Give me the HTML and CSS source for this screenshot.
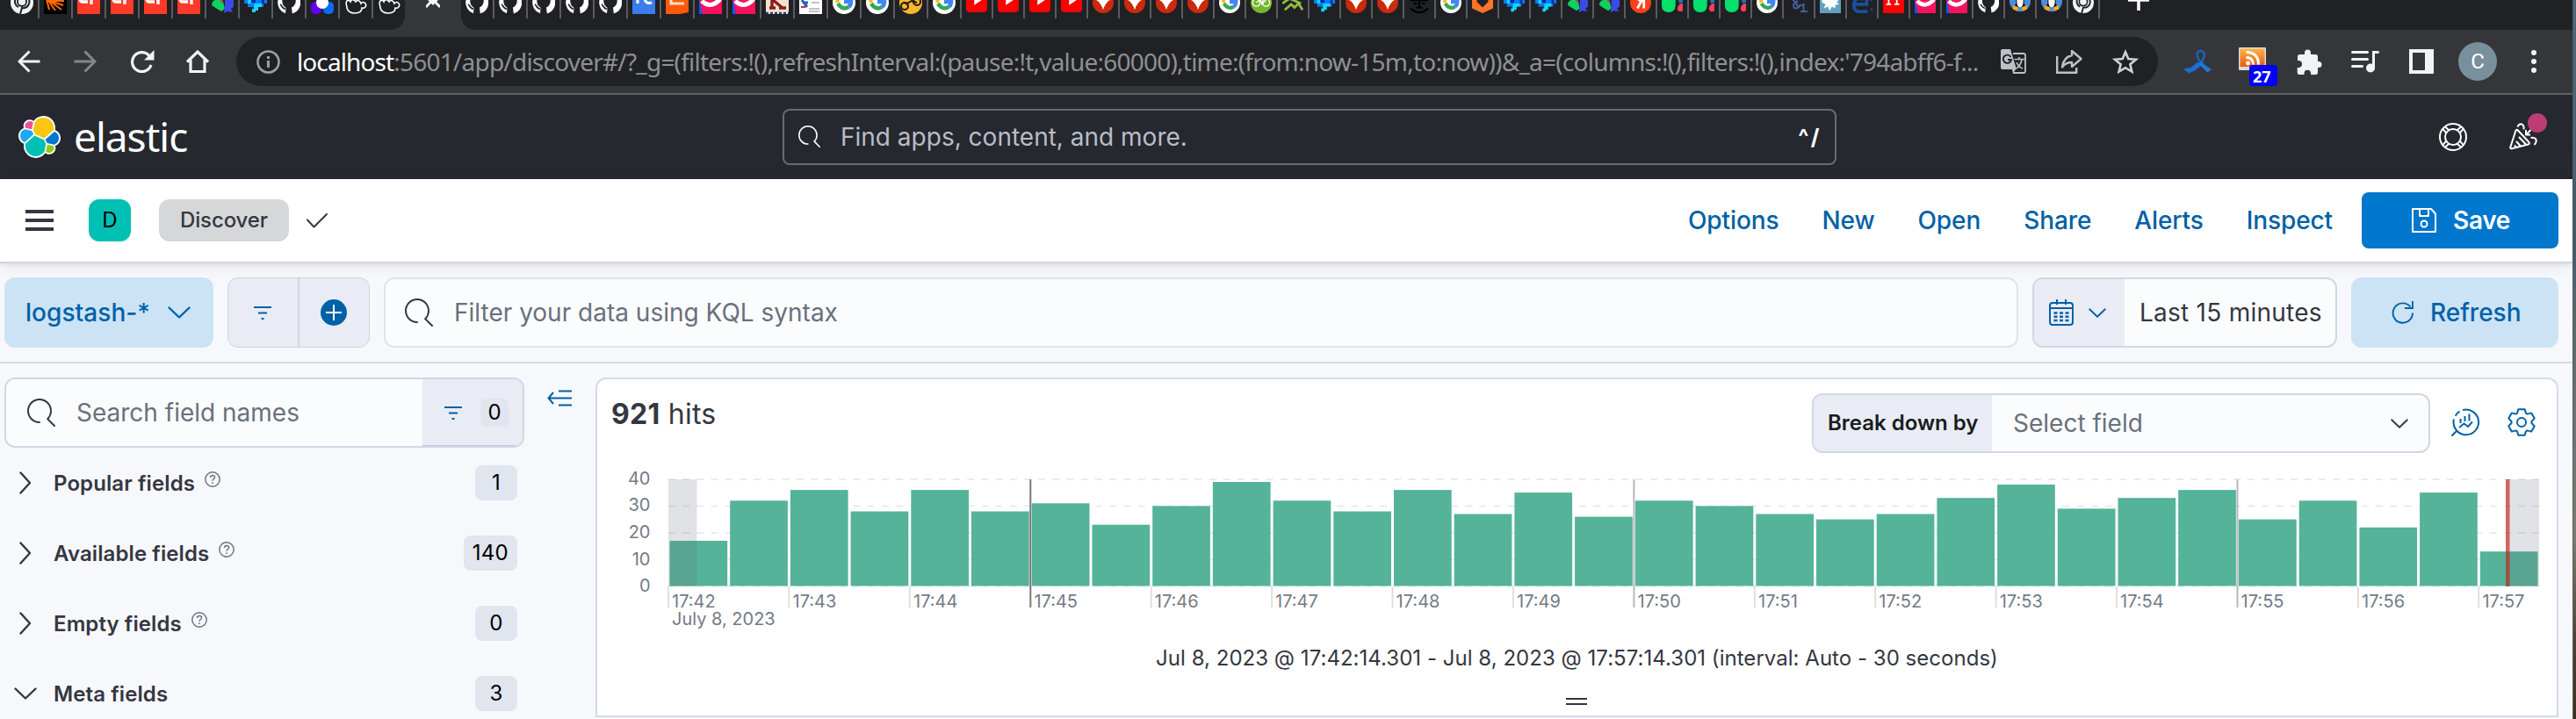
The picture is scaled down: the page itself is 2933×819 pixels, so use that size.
FILE: index.html
```html
<!DOCTYPE html>
<html lang="en">
<head>
<meta charset="utf-8">
<title>Discover - Elastic</title>
<link rel="stylesheet" href="styles.css">
</head>
<body>
<svg class="defs" width="0" height="0" aria-hidden="true">
  <defs>
    <linearGradient id="rssg" x1="0" y1="0" x2="0" y2="1"><stop offset="0" stop-color="#ffb347"/><stop offset="1" stop-color="#ea5a0c"/></linearGradient>
    <symbol id="chrome" viewBox="0 0 26 26"><circle cx="13" cy="13" r="13" fill="#f1f3f4"/><path d="M6 8a7 7 0 0 0 3 10M20 8a7 7 0 0 1-7 11l-2 7" stroke="#202124" stroke-width="2" fill="none"/><circle cx="13" cy="12" r="5" fill="#f1f3f4" stroke="#202124" stroke-width="1.800"/></symbol>
    <symbol id="ray" viewBox="0 0 26 26"><path fill="#000" d="M0 0h26v26H0z"/><path d="M4 11h19M4 10l18 6M4 9l16 12M4 9l9 13M3 9l3 12" stroke="#ff6a00" stroke-width="2"/></symbol>
    <symbol id="cf" viewBox="0 0 26 26"><path fill="#ff3a2b" d="M0 0h26v26H0z"/><path d="M12 12H6q-3 0-3-4V0M16 15V8h9" stroke="#fff" stroke-width="3.400" fill="none"/></symbol>
    <symbol id="shard" viewBox="0 0 26 26"><path fill="#0fd060" d="M2 12l6-4 6 4 2 8-4 3-5-3-6-4z"/><path fill="#3a4be8" d="M16 8h10v10l-3 2 2 4-6-1-4 2 1-8z"/><path fill="#e8303a" d="M10 8h6l-4 5z"/></symbol>
    <symbol id="pix" viewBox="0 0 26 26"><path fill="#0a7cff" d="M0 9h26v5h-4v4H4v-4H0z"/><path fill="#10d8ff" d="M4 9h4v5H4zM12 14h8v4h-4v4h-5v-4zM9 20h4v4H9z"/><path fill="#0030a0" d="M8 9h5v4H8zM20 9h3v5h-3z"/></symbol>
    <symbol id="gh" viewBox="0 0 26 26"><path fill="#fff" d="M13 0a13 13 0 0 0-4 25.300l.5-6.500C7 17 4.500 14 5.500 9h15c1 5-1.500 8-4.500 9.500l.8 7A13 13 0 0 0 13 0z"/><path d="M3 15c2 1 2 5 6 5" stroke="#202124" stroke-width="1.600" fill="none"/></symbol>
    <symbol id="duo" viewBox="0 0 26 26"><rect y="12" width="12" height="14" rx="5" fill="#6200f0"/><rect x="14" y="12" width="12" height="14" rx="5" fill="#0a6cff"/><circle cx="13" cy="13" r="7" fill="#fff"/></symbol>
    <symbol id="paw" viewBox="0 0 26 26"><path d="M3 11c-2 3 0 5 0 8 1 4 4 6 9 6 6 0 8-3 8-6 3 1 6-2 4-5-1-2-4-2-5 0-1-3-4-5-6-2-2-3-5-3-6 0-1-2-3-2-4-1z" fill="none" stroke="#fff" stroke-width="1.600"/></symbol>
    <symbol id="tc" viewBox="0 0 26 26"><path fill="#3b7ded" d="M0 0h26v26H0z"/><path d="M6 14V4M22 13q-8 2-8-6" stroke="#fff" stroke-width="3" fill="none"/></symbol>
    <symbol id="el" viewBox="0 0 26 26"><path fill="#ff5a0a" d="M0 0h26v24l-10 2H0z"/><path d="M6 3v11h15" stroke="#ffe0c8" stroke-width="3" fill="none"/></symbol>
    <symbol id="pink" viewBox="0 0 26 26"><path fill="#f5145c" d="M0 0h26v26H0z"/><path fill="#1a50ff" d="M0 8l4 18H0z"/><path d="M3 11q10 10 21-2" stroke="#fff" stroke-width="5" fill="none"/></symbol>
    <symbol id="kk" viewBox="0 0 26 26"><path fill="#efe3cc" d="M0 0h26v26H0z"/><path d="M7 0v19M4 19h7M8 10l11 9M15 19h8" stroke="#8c1c1c" stroke-width="3.400"/><path d="M0 25h26" stroke="#24408c" stroke-width="2.500" stroke-dasharray="3 2"/></symbol>
    <symbol id="doc" viewBox="0 0 26 26"><path fill="#fff" d="M0 0h26v26H0z"/><path d="M3 10l6 8M5 13h5" stroke="#3060c0" stroke-width="3"/><path d="M2 18h5" stroke="#d03030" stroke-width="2"/><path d="M14 13h9M11 20h12M11 23h12" stroke="#888" stroke-width="1.200"/></symbol>
    <symbol id="goog" viewBox="0 0 26 26"><circle cx="13" cy="13" r="13" fill="#fff"/><path d="M5.500 8v5" stroke="#fbbc05" stroke-width="4"/><path d="M6 14q5 8 12 4" stroke="#34a853" stroke-width="4.500" fill="none"/><path d="M13 12h8q0 4-3 6" stroke="#4285f4" stroke-width="4.500" fill="none"/></symbol>
    <symbol id="moto" viewBox="0 0 26 26"><circle cx="13" cy="13" r="13" fill="#fbb62c"/><g fill="none" stroke="#1a1a1a" stroke-width="2"><circle cx="6" cy="17" r="4"/><circle cx="20" cy="12" r="4"/><path d="M7 15l7-4 6 2"/></g></symbol>
    <symbol id="yt" viewBox="0 0 26 26"><path fill="#f00" d="M0 0h26v20q0 5-5 5H5q-5 0-5-5z"/><path fill="#fff" d="M10 7l9 3-9 6z"/></symbol>
    <symbol id="vee" viewBox="0 0 26 26"><circle cx="13" cy="13" r="13" fill="#cc2a0c"/><path fill="#fff" d="M3 9h20q-7 3-10 13Q10 12 3 9z"/></symbol>
    <symbol id="bike" viewBox="0 0 26 26"><circle cx="13" cy="13" r="13" fill="#74b72c"/><g fill="none" stroke="#fff" stroke-width="1.500"><circle cx="7" cy="13" r="4.500"/><circle cx="19" cy="13" r="4.500"/><path d="M7 13l5-4 2 6 5-6"/></g></symbol>
    <symbol id="hill" viewBox="0 0 26 26"><path d="M0 14l9-6 14 6M3 22l8-7 4 4 5-5 5 8" stroke="#8fbf3c" stroke-width="3" fill="none"/></symbol>
    <symbol id="guy" viewBox="0 0 26 26"><path d="M2 10h22M6 14h4M16 14h4M13 10v9M9 19h8M2 20q11 10 22 0" stroke="#000" stroke-width="2.400" fill="none"/></symbol>
    <symbol id="hex" viewBox="0 0 26 26"><path fill="#fb7428" d="M0 8h26v12l-13 6-13-6z"/><path fill="#202124" d="M6 8h14v4l-7 7-7-7z"/></symbol>
    <symbol id="ya" viewBox="0 0 26 26"><circle cx="13" cy="13" r="13" fill="#fc3f1d"/><path d="M17 2v18M16 11h-3q-4-2-4-6M14 11l-5 9" stroke="#fff" stroke-width="3" fill="none"/></symbol>
    <symbol id="blob" viewBox="0 0 26 26"><rect y="2" width="17" height="23" rx="8" fill="#06e06a"/><path fill="#fc4058" d="M26 14v9c-5 3-8-1-6-5 1-3 3-4 6-4z"/><path fill="#1677c8" d="M20 8h6v5l-4 1z"/></symbol>
    <symbol id="amp" viewBox="0 0 26 26"><path d="M5 9q5 3 7 10M12 11q-8 3-4 9 5 1 7-5M16 17l3-2v9M15 24h9" stroke="#4a62a0" stroke-width="2" fill="none"/></symbol>
    <symbol id="splat" viewBox="0 0 26 26"><path fill="#62a0c0" d="M0 0h26v26H0z"/><path fill="#fff" d="M2 8h22l-3 5 3 2-5 1v4l-4-2-3 5-2-5-5 2 2-5-4-2z"/></symbol>
    <symbol id="ee" viewBox="0 0 26 26"><path d="M18 8H8q-5 2-5 8 0 8 7 8h10M5 15h14v-6" stroke="#1c4f9c" stroke-width="4" fill="none"/><path d="M25 9v2M25 20v3" stroke="#1c4f9c" stroke-width="2"/></symbol>
    <symbol id="ft" viewBox="0 0 26 26"><path fill="#f00" d="M0 0h26v26H0z"/><path d="M7 2v13M4 15h6M17 2v13M14 15h6" stroke="#fff" stroke-width="2"/></symbol>
    <symbol id="tux" viewBox="0 0 26 26"><circle cx="13" cy="11" r="13" fill="#4c8ce0"/><path fill="#111" d="M8 5h10v9l3 5H5l3-5z"/><ellipse cx="13" cy="12" rx="4" ry="7" fill="#fff"/><path fill="#f0b010" d="M5 16l6 3-1 4-6-2zM21 16l-6 3 1 4 6-2z"/></symbol>
    <symbol id="search" viewBox="0 0 16 16"><path d="M11.271 11.978l3.872 3.873a.502.502 0 00.708 0 .502.502 0 000-.708l-3.565-3.564c2.380-2.747 2.267-6.923-.342-9.532-2.730-2.730-7.170-2.730-9.898 0-2.728 2.729-2.728 7.170 0 9.900a6.955 6.955 0 004.949 2.050.5.5 0 000-1 5.960 5.960 0 01-4.242-1.757 6.010 6.010 0 010-8.486 6.004 6.004 0 018.484 0 6.010 6.010 0 010 8.486.5.5 0 00.034.738z"/></symbol>
    <symbol id="filter" viewBox="0 0 22 16"><path d="M1 2h20M6 8.500h10M9.500 15h3" fill="none" stroke="currentColor" stroke-width="2" /></symbol>
    <symbol id="down" viewBox="0 0 26 14"><path d="M1.500 1.500L13 12.500l11.500-11" fill="none" stroke="currentColor" stroke-width="2.400" stroke-linecap="round" stroke-linejoin="round"/></symbol>
    <symbol id="right" viewBox="0 0 14 26"><path d="M1.500 1.500L12 13 1.500 24.500" fill="none" stroke="currentColor" stroke-width="2.400" stroke-linecap="round" stroke-linejoin="round"/></symbol>
    <symbol id="help" viewBox="0 0 18 18"><circle cx="9" cy="9" r="8.200" fill="none" stroke="currentColor" stroke-width="1.400"/><path d="M6.400 7q.2-2.500 2.700-2.500 2.400 0 2.500 2.100 0 1.400-1.500 2.200-1.100.6-1.100 2" fill="none" stroke="currentColor" stroke-width="1.400"/><circle cx="9" cy="13.200" r=".9" fill="currentColor"/></symbol>
  </defs>
</svg>

<div class="desktop">
<div class="window">
  <div class="tabstrip">
    <div class="tabs tabs-left">
      <i class="tab"><svg><use href="#chrome"/></svg></i><i class="tab"><svg><use href="#ray"/></svg></i><i class="tab"><svg><use href="#cf"/></svg></i><i class="tab"><svg><use href="#cf"/></svg></i><i class="tab"><svg><use href="#cf"/></svg></i><i class="tab"><svg><use href="#cf"/></svg></i><i class="tab"><svg><use href="#shard"/></svg></i><i class="tab"><svg><use href="#pix"/></svg></i><i class="tab"><svg><use href="#gh"/></svg></i><i class="tab"><svg><use href="#duo"/></svg></i><i class="tab"><svg><use href="#paw"/></svg></i><i class="tab last"><svg><use href="#paw"/></svg></i>
    </div>
    <div class="tab-active"><svg width="16" height="24" viewBox="0 0 16 24"><path d="M0 14L8 5.500 16 14M0 2l8 8 8-8" fill="none" stroke="#fff" stroke-width="2.800"/></svg></div>
    <div class="tabs tabs-right">
      <i class="tab"><svg><use href="#gh"/></svg></i><i class="tab"><svg><use href="#gh"/></svg></i><i class="tab"><svg><use href="#gh"/></svg></i><i class="tab"><svg><use href="#gh"/></svg></i><i class="tab"><svg><use href="#gh"/></svg></i><i class="tab"><svg><use href="#tc"/></svg></i><i class="tab"><svg><use href="#el"/></svg></i><i class="tab"><svg><use href="#pink"/></svg></i><i class="tab"><svg><use href="#pink"/></svg></i><i class="tab"><svg><use href="#kk"/></svg></i><i class="tab"><svg><use href="#doc"/></svg></i><i class="tab"><svg><use href="#goog"/></svg></i><i class="tab"><svg><use href="#goog"/></svg></i><i class="tab"><svg><use href="#moto"/></svg></i><i class="tab"><svg><use href="#goog"/></svg></i>
      <i class="tab sm"><svg><use href="#yt"/></svg></i><i class="tab sm"><svg><use href="#yt"/></svg></i><i class="tab sm"><svg><use href="#yt"/></svg></i><i class="tab sm"><svg><use href="#yt"/></svg></i><i class="tab sm"><svg><use href="#vee"/></svg></i><i class="tab sm"><svg><use href="#vee"/></svg></i><i class="tab sm"><svg><use href="#vee"/></svg></i><i class="tab sm"><svg><use href="#vee"/></svg></i><i class="tab sm"><svg><use href="#goog"/></svg></i><i class="tab sm"><svg><use href="#bike"/></svg></i><i class="tab sm"><svg><use href="#hill"/></svg></i><i class="tab sm"><svg><use href="#pix"/></svg></i><i class="tab sm"><svg><use href="#vee"/></svg></i><i class="tab sm"><svg><use href="#vee"/></svg></i><i class="tab sm"><svg><use href="#guy"/></svg></i><i class="tab sm"><svg><use href="#goog"/></svg></i><i class="tab sm"><svg><use href="#hex"/></svg></i><i class="tab sm"><svg><use href="#pix"/></svg></i><i class="tab sm"><svg><use href="#pix"/></svg></i><i class="tab sm"><svg><use href="#shard"/></svg></i><i class="tab sm"><svg><use href="#shard"/></svg></i><i class="tab sm"><svg><use href="#ya"/></svg></i><i class="tab sm"><svg><use href="#blob"/></svg></i><i class="tab sm"><svg><use href="#blob"/></svg></i><i class="tab sm"><svg><use href="#blob"/></svg></i><i class="tab sm"><svg><use href="#goog"/></svg></i><i class="tab sm"><svg><use href="#amp"/></svg></i><i class="tab sm"><svg><use href="#splat"/></svg></i><i class="tab sm"><svg><use href="#ee"/></svg></i><i class="tab sm"><svg><use href="#ft"/></svg></i><i class="tab sm"><svg><use href="#pink"/></svg></i><i class="tab sm"><svg><use href="#pink"/></svg></i><i class="tab sm"><svg><use href="#gh"/></svg></i><i class="tab sm"><svg><use href="#tux"/></svg></i><i class="tab sm"><svg><use href="#tux"/></svg></i><i class="tab sm"><svg><use href="#chrome"/></svg></i>
      <svg class="newtab" width="24" height="24" viewBox="0 0 24 24"><path d="M12 0v24M0 12h24" stroke="#fff" stroke-width="3.600"/></svg>
    </div>
  </div>

  <div class="toolbar">
    <div class="navbtns">
      <svg width="26" height="26" viewBox="0 0 26 26"><path d="M25.500 13H2.500M13.500 1.500L2 13l11.500 11.500" fill="none" stroke="#f1f3f4" stroke-width="3"/></svg>
      <svg width="26" height="26" viewBox="0 0 26 26"><path d="M.5 13h23M12.500 1.500L24 13 12.500 24.500" fill="none" stroke="#85878a" stroke-width="3"/></svg>
      <svg width="28" height="26" viewBox="0 0 28 26"><path d="M22 6.500A11 11 0 1 0 24 17" fill="none" stroke="#f1f3f4" stroke-width="3.200"/><path d="M27.500 0v11.500H16z" fill="#f1f3f4"/></svg>
      <svg width="26" height="26" viewBox="0 0 26 26"><path d="M1 13.500L13 2l12 11.500M5 11v13.500h16V11" fill="none" stroke="#f1f3f4" stroke-width="3.200"/></svg>
    </div>
    <div class="omnibox">
      <svg width="27" height="27" viewBox="0 0 27 27"><circle cx="13.500" cy="13.500" r="12" fill="none" stroke="#9aa0a6" stroke-width="2.600"/><path d="M13.500 12v8M13.500 7v3" stroke="#9aa0a6" stroke-width="3"/></svg>
      <div class="url"><span class="host">localhost</span><span class="path">:5601/app/discover#/?_g=(filters:!(),refreshInterval:(pause:!t,value:60000),time:(from:now-15m,to:now))&amp;_a=(columns:!(),filters:!(),index:'794abff6-f...</span></div>
      <div class="omni-icons">
        <svg width="29" height="29" viewBox="0 0 29 29"><path d="M14 5h12q2 0 2 2v18q0 2-2 2H14" fill="none" stroke="#bdc1c6" stroke-width="1.800"/><path d="M2 0h9l7 23H2q-2 0-2-2V2q0-2 2-2z" fill="#bdc1c6"/><path d="M13 23l4 0-3 5z" fill="#bdc1c6"/><path d="M11.500 9A4.600 4.600 0 1 0 12 12H8" fill="none" stroke="#202124" stroke-width="1.900"/><path d="M15.500 11.500H27M21 9v2.500M18 15q2 5 7 7M24 12q-1 6-6 10" fill="none" stroke="#bdc1c6" stroke-width="1.600"/></svg>
        <svg width="30" height="28" viewBox="0 0 30 28"><path d="M1.200 8v18.800h22V21" fill="none" stroke="#bdc1c6" stroke-width="2.400"/><path d="M18 2l10.500 9L18 20v-5q-7 0-11 5.500Q8.500 9 18 7z" fill="none" stroke="#bdc1c6" stroke-width="2.400" stroke-linejoin="round"/></svg>
        <svg width="30" height="28" viewBox="0 0 30 28"><path d="M15 3.300l3.300 7.800 8.600.7-6.500 5.500 2 8.300L15 21.200l-7.400 4.400 2-8.300-6.500-5.500 8.600-.7z" fill="none" stroke="#d0d3d6" stroke-width="2.600"/></svg>
      </div>
    </div>
    <div class="exts">
      <svg width="32" height="28" viewBox="0 0 32 28"><path d="M22 17C14 10 14 2 19.500 2c5 0 6 7 1 12.500" fill="none" stroke="#1862b8" stroke-width="2.600"/><path d="M0 22.500l8-1.500 9-6.500 4 3.500-8 6.500-7 3z" fill="#1a6fd0"/><path d="M20 13.500l5 5 7 4.500-4.500 3.500-9.500-9z" fill="#1f78dc"/></svg>
      <span class="rss"><svg width="31" height="26" viewBox="0 0 31 26"><rect width="31" height="26" rx="1" fill="#d6dbe0"/><path fill="url(#rssg)" d="M1.500 1.500h28V22h-28z"/><circle cx="10.500" cy="18" r="2.400" fill="#fff"/><path d="M8.500 11.500q8 0 8 8M8.500 5.500q14 0 14 14" fill="none" stroke="#fff" stroke-width="3"/></svg><b class="count">27</b></span>
      <svg width="29" height="29" viewBox="0 0 29 29"><path fill="#f1f3f4" d="M25 14h-1V8.500q0-2.500-2.500-2.500H16V4a3.500 3.500 0 0 0-7 0v2H3.500Q1 6 1 8.500V13h1a4 4 0 0 1 0 8H.7v5.500Q.7 29 3 29h5.500v-1.500a3.800 3.800 0 0 1 7.600 0V29h5.400q2.500 0 2.500-2.500V21h1a3.500 3.500 0 0 0 0-7z"/></svg>
      <svg width="32" height="25" viewBox="0 0 32 25"><path d="M1.500 1.500h17M1.500 9.500h17M1.500 17.500h11M30.500 1.500h-5v18" fill="none" stroke="#f1f3f4" stroke-width="3" stroke-linecap="round"/><circle cx="22" cy="19.500" r="5" fill="#f1f3f4"/></svg>
      <svg width="28" height="28" viewBox="0 0 28 28"><path fill="#f1f3f4" fill-rule="evenodd" d="M0 0h28v28H0zM4 4v20h14V4z"/></svg>
      <span class="avatar">C</span>
      <svg width="6" height="26" viewBox="0 0 6 26"><g fill="#f1f3f4"><circle cx="3" cy="3" r="3"/><circle cx="3" cy="13" r="3"/><circle cx="3" cy="23" r="3"/></g></svg>
    </div>
  </div>

  <header class="ehead">
    <div class="brand">
      <svg width="48" height="48" viewBox="0 0 32 32"><path fill="#FFF" d="M32 16.770c0-2.670-1.650-5-4.140-5.920.11-.57.17-1.150.17-1.740C28.030 4.080 23.950 0 18.940 0c-2.940 0-5.660 1.400-7.370 3.770A4.800 4.800 0 0 0 8.610 2.770a4.850 4.850 0 0 0-4.550 6.500C1.570 10.160 0 12.540 0 15.210c0 2.680 1.660 5.020 4.150 5.940-.11.57-.17 1.150-.17 1.740 0 5 4.070 9.070 9.070 9.070 2.940 0 5.650-1.410 7.360-3.780.84.66 1.880 1.030 2.960 1.030a4.850 4.850 0 0 0 4.550-6.500C30.430 21.800 32 19.420 32 16.770"/><path fill="#FEC514" d="m12.580 13.790 7 3.200 7.080-6.200c.1-.52.15-1.040.15-1.570A7.910 7.910 0 0 0 12.370 4.750l-1.180 6.100z"/><path fill="#00BFB3" d="M5.330 21.200c-.1.520-.15 1.050-.15 1.580a7.930 7.930 0 0 0 14.480 4.450l1.160-6.080-1.560-2.970-7.030-3.200z"/><path fill="#F04E98" d="m5.290 9.090 4.800 1.130 1.050-5.460A3.800 3.800 0 0 0 5.060 7.780c0 .45.080.9.230 1.310"/><path fill="#1BA9F5" d="M4.870 10.230A5.320 5.320 0 0 0 1.330 15.220c0 2.170 1.340 4.110 3.360 4.890l6.740-6.090-1.240-2.640z"/><path fill="#93C90E" d="M20.870 27.230a3.770 3.770 0 0 0 6.060-3.010c0-.46-.08-.91-.23-1.320l-4.800-1.120z"/><path fill="#07C" d="m21.850 20.650 5.290 1.230a5.340 5.340 0 0 0 3.530-4.990 5.230 5.230 0 0 0-3.370-4.880l-6.920 6.050z"/></svg>
      <span class="wordmark">elastic</span>
    </div>
    <div class="gsearch">
      <svg class="i-search" width="25" height="25"><use href="#search"/></svg>
      <span class="gs-text">Find apps, content, and more.</span>
      <span class="gs-key">^/</span>
    </div>
    <div class="ehead-right">
      <svg width="32" height="32" viewBox="0 0 32 32"><g fill="none" stroke="#fff" stroke-width="2"><circle cx="16" cy="16" r="15"/><circle cx="16" cy="16" r="9"/><path d="M6.800 4.300l4.800 4.200M4.300 6.800l4.200 4.800M25.200 4.300l-4.800 4.200M27.700 6.800l-4.200 4.800M6.800 27.700l4.800-4.200M4.300 25.200l4.200-4.800M25.200 27.700l-4.800-4.200M27.700 25.200l-4.200-4.800"/></g></svg>
      <span class="cheer"><svg width="32" height="32" viewBox="0 0 32 32"><g fill="none" stroke="#fff" stroke-width="2" stroke-linejoin="round"><path d="M7.500 8.500Q8.500 7 9.700 8.200l12.500 13.600q1.500 2-.7 2.700L3 29.300q-2 .3-1.700-1.700z"/><path d="M11 16l8 8.500M8 21l5 5.500M6 25.500l2 2.300M9.500 4.500q1-3 4-3.200 3.500.3 3 6M19 8v5.500h5M20 12.500l4.500-4.500M24.500 17q3-1 5.500 1 2 3.500-1.500 7"/></g></svg><i class="dot"></i></span>
    </div>
  </header>

  <nav class="subhead">
    <svg class="burger" width="32" height="24" viewBox="0 0 32 24"><path d="M0 2h32M0 12h32M0 22h32" stroke="#343741" stroke-width="4"/></svg>
    <span class="space">D</span>
    <span class="crumb">Discover</span>
    <svg class="check" width="24" height="17" viewBox="0 0 24 17"><path d="M1 7.500L8.500 15.500 23 1" fill="none" stroke="#343741" stroke-width="2" stroke-linecap="round" stroke-linejoin="round"/></svg>
    <div class="menu"><a>Options</a><a>New</a><a>Open</a><a>Share</a><a>Alerts</a><a>Inspect</a></div>
    <button class="save"><svg width="28" height="28" viewBox="0 0 28 28"><g fill="none" stroke="#fff" stroke-width="2" stroke-linejoin="round"><path d="M1 1h21l5 5.500V27H1z"/><path d="M9 1v8h10V1"/><circle cx="14" cy="18" r="3.500"/></g></svg>Save</button>
  </nav>

  <div class="querybar">
    <span class="dataview">logstash-*<svg width="26" height="14"><use href="#down"/></svg></span>
    <span class="fgroup"><i><svg width="22" height="16"><use href="#filter"/></svg></i><i><svg width="30" height="30" viewBox="0 0 30 30"><circle cx="15" cy="15" r="15" fill="#0061a6"/><path d="M15 6v18M6 15h18" stroke="#fff" stroke-width="2"/></svg></i></span>
    <span class="kql"><svg class="i-search" width="32" height="32"><use href="#search"/></svg><span>Filter your data using KQL syntax</span></span>
    <span class="dates"><i><svg width="28" height="30" viewBox="0 0 28 30"><g fill="none" stroke="#0061a6" stroke-width="2"><rect x="1" y="4" width="26" height="25" rx="3"/><path d="M1 10h26M9 0v6M19 0v6"/><path d="M5.500 15.500h17M5.500 19.800h17M5.500 24h17" stroke-width="2.400" stroke-dasharray="4 2.500"/></g></svg><svg width="20" height="11"><use href="#down"/></svg></i><span>Last 15 minutes</span></span>
    <span class="refresh"><svg width="26" height="28" viewBox="0 0 26 28"><path d="M21.500 7.500A11.200 11.200 0 1 0 24 14.500M24 1v8h-9" fill="none" stroke="#0061a6" stroke-width="1.900"/></svg>Refresh</span>
  </div>

  <main class="content">
    <aside class="side">
      <div class="side-top">
        <div class="fsearch"><svg class="i-search" width="32" height="32"><use href="#search"/></svg><span class="ph">Search field names</span><span class="fappend"><svg width="22" height="16"><use href="#filter"/></svg><b>0</b></span></div>
        <svg class="collapse" width="28" height="19" viewBox="0 0 28 19"><path d="M13 1.500h15M1.500 9.500H28M13 17.500h15M7 3L1.500 9.500 7 16" fill="none" stroke="#0061a6" stroke-width="2"/></svg>
      </div>
      <div class="frow"><i><svg width="14" height="26"><use href="#right"/></svg></i><span>Popular fields</span><svg class="q" width="18" height="18"><use href="#help"/></svg><b>1</b></div>
      <div class="frow"><i><svg width="14" height="26"><use href="#right"/></svg></i><span>Available fields</span><svg class="q" width="18" height="18"><use href="#help"/></svg><b>140</b></div>
      <div class="frow"><i><svg width="14" height="26"><use href="#right"/></svg></i><span>Empty fields</span><svg class="q" width="18" height="18"><use href="#help"/></svg><b>0</b></div>
      <div class="frow"><i><svg width="26" height="14"><use href="#down"/></svg></i><span>Meta fields</span><b>3</b></div>
    </aside>
    <section class="panel">
      <div class="phead">
        <div class="hits"><strong>921</strong> hits</div>
        <div class="breakdown"><span class="bd-label">Break down by</span><span class="bd-val">Select field</span><svg width="20" height="11"><use href="#down"/></svg></div>
        <svg class="lens" width="32" height="32" viewBox="0 0 32 32"><g fill="none" stroke="#0061a6" stroke-width="2"><path d="M13 2.100A14.300 14.300 0 1 1 2.900 12.500M4.700 8.700A14 14 0 0 1 9.500 3.700M6 26l-5.500 5.500"/><path d="M10.500 12v5M15.500 9v6M20.500 6.500v8M9 22l5.500-4.500 4.500 3.500 5-5.500"/></g></svg>
        <svg class="gear" width="32" height="32" viewBox="0 0 32 32"><g fill="none" stroke="#0061a6" stroke-width="2" stroke-linejoin="round"><path d="M12.300 1.200h7.400l1.300 4.500 1.500.9 4.700-1.200 3.500 6.200-3.200 3.400v2l3.200 3.400-3.500 6.200-4.700-1.200-1.500.9-1.300 4.500h-7.400L11 26.300l-1.500-.9-4.700 1.200-3.500-6.200L4.500 17v-2l-3.200-3.400 3.500-6.200 4.700 1.200 1.500-.9z"/><circle cx="16" cy="16" r="5"/></g></svg>
      </div>
      <svg class="chart" width="2231" height="200" viewBox="680 520 2231 200">
        <g stroke="#e9ebf3" stroke-width="2" stroke-dasharray="8 8.200"><path d="M761 546H2891M761 576.400H2891M761 607H2891M761 637.400H2891M761 667.500H2891"/></g>
        <g fill="#54b399">
          <rect x="762.500" y="616" width="65.700" height="51.500"/><rect x="831.200" y="570.300" width="65.700" height="97.200"/><rect x="899.900" y="558.100" width="65.700" height="109.400"/><rect x="968.600" y="582.500" width="65.700" height="85"/><rect x="1037.300" y="558.100" width="65.700" height="109.400"/><rect x="1106" y="582.500" width="65.700" height="85"/><rect x="1174.800" y="573.300" width="65.700" height="94.200"/><rect x="1243.500" y="597.700" width="65.700" height="69.800"/><rect x="1312.200" y="576.400" width="65.700" height="91.100"/><rect x="1380.900" y="549" width="65.700" height="118.500"/><rect x="1449.600" y="570.300" width="65.700" height="97.200"/><rect x="1518.300" y="582.500" width="65.700" height="85"/><rect x="1587" y="558.100" width="65.700" height="109.400"/><rect x="1655.700" y="585.500" width="65.700" height="82"/><rect x="1724.400" y="561.100" width="65.700" height="106.400"/><rect x="1793.100" y="588.600" width="65.700" height="78.900"/><rect x="1861.900" y="570.300" width="65.700" height="97.200"/><rect x="1930.600" y="576.400" width="65.700" height="91.100"/><rect x="1999.300" y="585.500" width="65.700" height="82"/><rect x="2068" y="591.600" width="65.700" height="75.900"/><rect x="2136.700" y="585.500" width="65.700" height="82"/><rect x="2205.400" y="567.200" width="65.700" height="100.300"/><rect x="2274.100" y="552" width="65.700" height="115.500"/><rect x="2342.800" y="579.400" width="65.700" height="88.100"/><rect x="2411.500" y="567.200" width="65.700" height="100.300"/><rect x="2480.200" y="558.100" width="65.700" height="109.400"/><rect x="2549" y="591.600" width="65.700" height="75.900"/><rect x="2617.700" y="570.300" width="65.700" height="97.200"/><rect x="2686.400" y="600.800" width="65.700" height="66.700"/><rect x="2755.100" y="561.100" width="65.700" height="106.400"/><rect x="2823.800" y="628.200" width="65.700" height="39.300"/>
        </g>
        <g fill="#69707d" fill-opacity=".2"><path d="M761 546h32.500v122H761zM2857 546h34v122h-34z"/></g>
        <path d="M2853 546h4.500v122h-4.500z" fill="#bd271e" fill-opacity=".7"/>
        <g stroke="#dcdcdc" stroke-width="1.800"><path d="M761 668v24M898.400 668v24M1035.800 668v24M1310.700 668v24M1448.100 668v24M1585.500 668v24M1722.900 668v24M1997.800 668v24M2135.200 668v24M2272.600 668v24M2410 668v24M2684.900 668v24M2822.300 668v24"/></g>
        <path d="M1173.300 546v146" stroke="#777" stroke-width="2"/>
        <path d="M1860.400 546v146M2547.500 546v146" stroke="#b8b8b8" stroke-width="2"/>
        <g class="ylab"><text x="740.500" y="552">40</text><text x="740.500" y="582">30</text><text x="740.500" y="612.500">20</text><text x="740.500" y="643.500">10</text><text x="740.500" y="674">0</text></g>
        <g class="xlab"><text x="765" y="691.800">17:42</text><text x="902.500" y="691.800">17:43</text><text x="1040" y="691.800">17:44</text><text x="1177.400" y="691.800">17:45</text><text x="1314.800" y="691.800">17:46</text><text x="1452" y="691.800">17:47</text><text x="1589.600" y="691.800">17:48</text><text x="1727" y="691.800">17:49</text><text x="1864.500" y="691.800">17:50</text><text x="2002" y="691.800">17:51</text><text x="2139.300" y="691.800">17:52</text><text x="2276.700" y="691.800">17:53</text><text x="2414" y="691.800">17:54</text><text x="2551.600" y="691.800">17:55</text><text x="2689" y="691.800">17:56</text><text x="2826.400" y="691.800">17:57</text><text x="765" y="712">July 8, 2023</text></g>
      </svg>
      <div class="caption">Jul 8, 2023 @ 17:42:14.301 - Jul 8, 2023 @ 17:57:14.301 (interval: Auto - 30 seconds)</div>
      <div class="handle"></div>
    </section>
  </main>
</div>
<div class="wallpaper"></div>
</div>
</body>
</html>
```
FILE: styles.css
```css
* { box-sizing: border-box; }
body { margin: 0; font-family: Inter, "Liberation Sans", sans-serif; font-size: 28px; color: #343741; background: #f7f8fc; }
i, b { font-style: normal; font-weight: 400; }
svg { display: block; flex: none; }
.defs { position: absolute; }
.desktop { display: flex; width: 2933px; height: 819px; overflow: hidden; }
.window { width: 2929px; display: flex; flex-direction: column; }
.window > * { flex: none; }
.wallpaper { width: 4px; background: linear-gradient(#47697c 0, #45606d 35%, #6a7270 55%, #7d7c72 75%, #4a4038 90%, #43301c 100%); border-left: 1px solid #55595c; }

.tabstrip { display: flex; height: 34px; background: #35363a; overflow: hidden; }
.tabs { display: flex; background: #202124; height: 34px; }
.tabs-left { width: 461px; padding-left: 7px; border-bottom-right-radius: 16px; }
.tabs-right { flex: 1; border-bottom-left-radius: 16px; }
.tab { flex: none; width: 38px; height: 21px; padding-left: 5px; border-right: 2px solid #5a5c60; overflow: hidden; }
.tab svg { width: 26px; height: 26px; margin-top: -10px; }
.tab.sm { width: 36px; }
.tab.sm svg { width: 24px; }
.tab.last { border-right: 0; width: 36px; }
.tab-active { width: 64px; display: flex; justify-content: center; overflow: hidden; }
.tab-active svg { margin-top: -6px; }
.newtab { margin: -12px 0 0 32px; }

.toolbar { display: flex; align-items: center; height: 74px; padding-left: 20px; background: #35363a; border-bottom: 2px solid #5f6164; }
.navbtns { display: grid; grid-template-columns: repeat(4, 64px); width: 249px; }
.omnibox { display: flex; align-items: center; width: 2188px; height: 56px; border-radius: 28px; background: #202124; padding-left: 23px; }
.url { flex: 1; margin-left: 19px; font: 28px/40px "Noto Sans", "Open Sans", sans-serif; color: #8d9094; white-space: nowrap; }
.host { color: #fff; letter-spacing: -.9px; }
.path { letter-spacing: -.78px; }
.omni-icons { display: flex; align-items: center; gap: 34px; width: 179px; }
.exts { display: grid; grid-template-columns: 63px 66px 62px 66px 56px 83px 6px; align-items: center; padding-left: 29px; }
.rss { position: relative; width: 31px; height: 32px; }
.count { position: absolute; left: 12px; top: 20px; width: 32px; height: 24px; border-radius: 4px; background: #00f; color: #fff; font: 700 18px/26px "Noto Sans", sans-serif; padding-left: 4px; }
.avatar { width: 44px; height: 44px; border-radius: 50%; background: #78909c; color: #fff; font: 24px/44px Roboto, sans-serif; text-align: center; }

.ehead { display: flex; align-items: center; height: 96px; background: #25282f; padding-bottom: 1px; }
.brand { display: flex; align-items: center; width: 891px; padding-left: 21px; }
.wordmark { font: 46px/60px "Noto Sans", sans-serif; color: #fff; letter-spacing: -1px; margin-left: 15px; padding-bottom: 1px; }
.gsearch { display: flex; align-items: center; width: 1200px; height: 64px; border: 2px solid #696b70; border-radius: 8px; padding: 0 15px 0 16px; color: #b9bdc7; }
.gsearch .i-search { fill: #fff; }
.gs-text { margin-left: 23px; }
.gs-key { margin-left: auto; color: #fff; font-weight: 700; font-size: 25px; letter-spacing: 2.5px; }
.ehead-right { display: flex; align-items: center; flex: 1; justify-content: flex-end; gap: 48px; padding-right: 40px; }
.cheer { position: relative; }
.dot { position: absolute; left: 21px; top: -11px; width: 22px; height: 22px; border-radius: 50%; background: #bc3c74; }

.subhead { position: relative; z-index: 1; display: flex; align-items: center; height: 96px; background: #fff; border-bottom: 2px solid #d0d6e3; box-shadow: 0 2px 5px rgba(0,0,0,.07), 0 6px 16px rgba(0,0,0,.05); padding: 0 16px 0 29px; }
.space { width: 48px; height: 48px; margin-left: 40px; border-radius: 12px; background: #00bfb3; color: #000; font-size: 24px; line-height: 48px; text-align: center; }
.crumb { width: 148px; height: 48px; margin-left: 32px; border-radius: 12px; background: #d6d7d9; font-size: 24px; font-weight: 500; line-height: 47px; text-align: center; letter-spacing: -.1px; }
.check { margin-left: 20px; }
.menu { display: flex; gap: 49px; margin: 0 33px 0 auto; color: #0061a6; font-weight: 500; letter-spacing: -.1px; }
.save { display: flex; align-items: center; gap: 19px; width: 224px; height: 64px; padding: 0 0 0 57px; border: 0; border-radius: 8px; background: #0077cc; color: #fff; font: 600 28px Inter, sans-serif; letter-spacing: -.3px; }

.querybar { display: flex; align-items: center; height: 114px; padding: 0 16px 0 5px; border-bottom: 2px solid #d3dae6; }
.querybar > span { height: 80px; display: flex; align-items: center; border-radius: 12px; white-space: nowrap; }
.dataview { width: 238px; padding-left: 24px; gap: 20px; background: #cce3f5; color: #0061a6; font-weight: 500; letter-spacing: .05px; }
.fgroup { width: 162px; margin-left: 16px; background: #e9ecf4; border: 1px solid #cdd3e4; color: #0061a6; }
.fgroup i { flex: 1; height: 100%; display: flex; align-items: center; justify-content: center; padding-right: 1px; }
.fgroup i + i { border-left: 2px solid #d0d6e6; }
.kql { width: 1861px; margin-left: 16px; padding-left: 22px; gap: 24px; border: 2px solid #e1e4ee; background: #fbfcfd; color: #69707d; }
.i-search { fill: #343741; }
.dates { width: 347px; margin-left: 16px; border: 2px solid #d0d7e6; background: #fbfcfd; overflow: hidden; }
.dates i { display: flex; align-items: center; width: 103px; height: 100%; padding-left: 17px; gap: 17px; background: #e9ecf4; color: #0061a6; }
.dates > span { margin-left: 17px; letter-spacing: .25px; }
.refresh { width: 236px; margin-left: 16px; padding-left: 46px; gap: 18px; background: #cce3f5; color: #0061a6; font-weight: 500; }

.content { display: flex; height: 405px; padding: 16px 16px 0 5px; }
.side { flex: none; width: 673px; }
.side-top { display: flex; height: 90px; }
.fsearch { display: flex; align-items: center; width: 592px; height: 80px; border: 2px solid #d0d7e6; border-radius: 12px; background: #fbfcfd; padding-left: 24px; overflow: hidden; color: #69707d; }
.ph { margin-left: 24px; }
.fappend { display: flex; align-items: center; width: 114px; height: 100%; margin-left: auto; padding-left: 24px; gap: 20px; background: #e9ecf4; border-bottom: 1px solid #bcc4dd; color: #0061a6; }
.fappend b { width: 32px; height: 32px; border-radius: 6px; background: #e0e5ee; color: #000; font-size: 24px; line-height: 32px; text-align: center; }
.collapse { margin: 14px 0 0 26px; }
.frow { display: flex; align-items: center; height: 40px; margin-bottom: 40px; padding-right: 89px; font-size: 24px; font-weight: 600; letter-spacing: .1px; }
.side-top + .frow { margin-top: 10px; }
.frow i { width: 49px; display: flex; justify-content: center; padding-right: 1px; }
.frow span { margin-left: 7px; }
.frow .q { margin: -8px 0 0 11px; color: #69707d; }
.frow b { min-width: 48px; height: 40px; margin-left: auto; padding: 0 10px; border-radius: 8px; background: #e0e5ee; color: #000; line-height: 40px; text-align: center; letter-spacing: .3px; }

.panel { flex: none; width: 2235px; height: 387px; border: 2px solid #d3dae6; border-radius: 12px 12px 0 0; background: #fff; }
.phead { display: flex; height: 88px; padding: 16px 24px 0 16px; }
.hits { font-size: 32px; line-height: 47px; white-space: nowrap; letter-spacing: .25px; }
.hits strong { font-weight: 700; }
.breakdown { display: flex; align-items: center; width: 704px; height: 68px; margin-left: auto; border: 2px solid #d0d7e6; border-radius: 12px; background: #fbfcfd; overflow: hidden; padding-right: 23px; }
.bd-label { width: 203px; height: 100%; background: #e9ecf4; color: #1a1c21; font-size: 24px; font-weight: 600; line-height: 64px; padding-left: 16px; }
.bd-val { flex: 1; padding-left: 24px; color: #69707d; }
.lens { margin: 17px 0 0 24px; }
.gear { margin: 17px 0 0 32px; }
.ylab, .xlab { font: 20px Inter, sans-serif; fill: #747a87; }
.ylab { text-anchor: end; }
.caption { height: 60px; line-height: 60px; text-align: center; font-size: 24px; letter-spacing: .03px; }
.handle { width: 24px; height: 8px; margin: 15px 1104px 12px 1103px; border: solid #343741; border-width: 2px 0; }
```
